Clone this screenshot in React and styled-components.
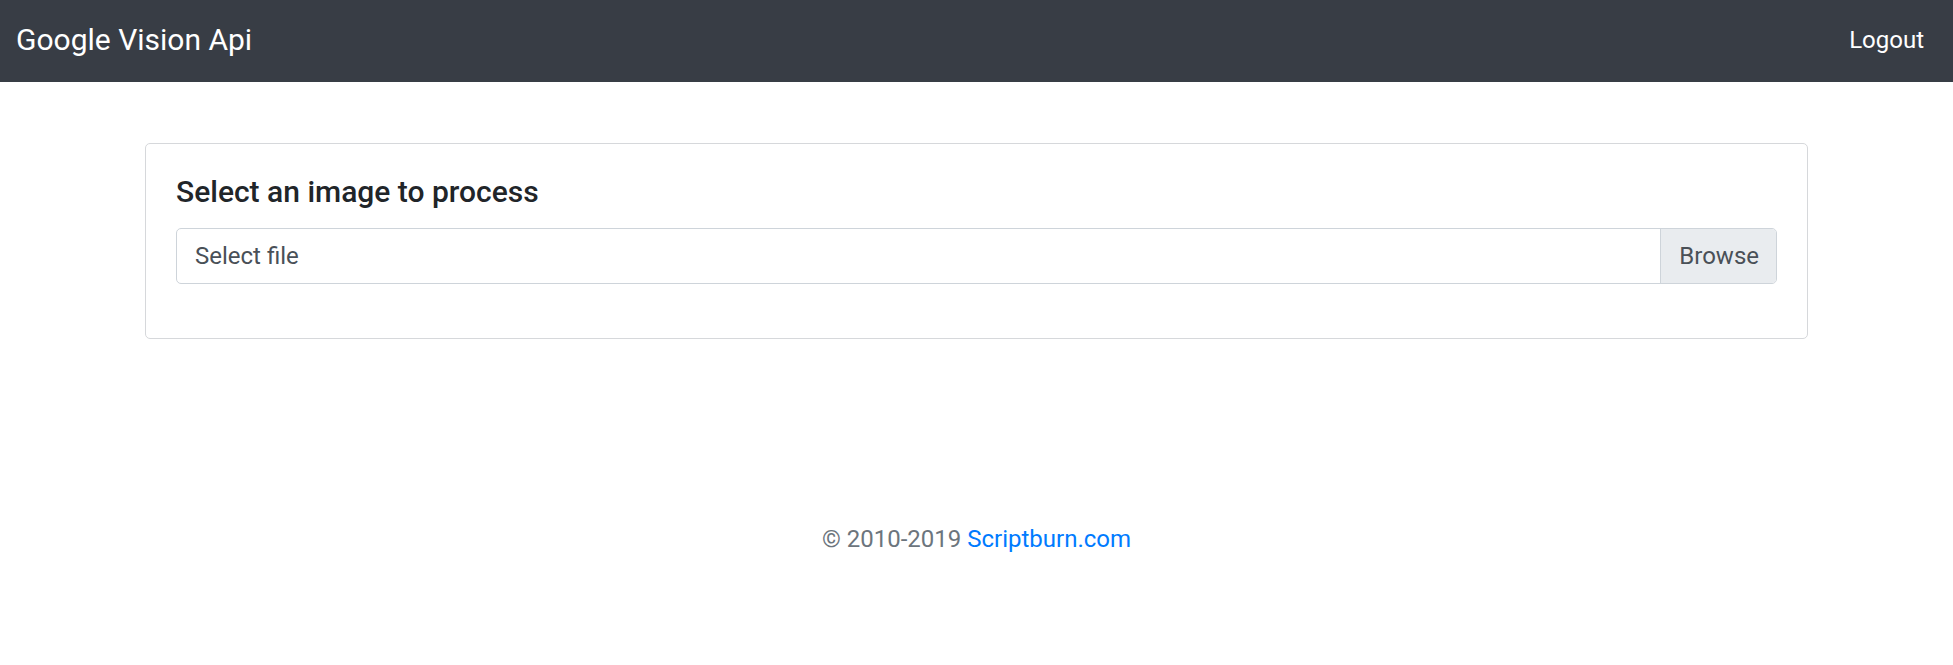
import styled, { createGlobalStyle } from 'styled-components';

const GlobalStyle = createGlobalStyle`
    body {
        margin: 0;
        font-family: Roboto, "Liberation Sans", sans-serif;
        font-size: 24px;
        line-height: 1.5;
        color: #212529;
        background: #ffffff;
    }
`;

export default function App() {
    return (
        <>
            <GlobalStyle/>
            <Navbar>
                <Brand>Google Vision Api</Brand>
                <NavLink>Logout</NavLink>
            </Navbar>
            <Card>
                <Title>Select an image to process</Title>
                <FileGroup>
                    <FileLabel>Select file</FileLabel>
                    <BrowseButton>Browse</BrowseButton>
                </FileGroup>
            </Card>
            <Footer>
                © 2010-2019 <a href="#">Scriptburn.com</a>
            </Footer>
        </>
    )
}

// styled components
const Navbar = styled.nav`
    display: flex;
    align-items: center;
    justify-content: space-between;
    box-sizing: border-box;
    height: 82px;
    padding: 0 29px 3px 16px;
    background-color: #383d45;
`;

const Brand = styled.div`
    font-size: 30px;
    color: #ffffff;
`;

const NavLink = styled.div`
    font-size: 24px;
    color: #ffffff;
`;

const Card = styled.div`
    box-sizing: border-box;
    margin: 61px 145px 0 145px;
    padding: 30px 30px 24px 30px;
    border: 1px solid #d6d8db;
    border-radius: 5px;
    height: 196px;
`;

const Title = styled.h5`
    margin: 0 0 18px 0;
    font-size: 30px;
    font-weight: 500;
    line-height: 1.2;
    color: #212529;
`;

const FileGroup = styled.div`
    display: flex;
    height: 56px;
    box-sizing: border-box;
    border: 1px solid #ced4da;
    border-radius: 5px;
    overflow: hidden;
`;

const FileLabel = styled.div`
    flex: 1;
    display: flex;
    align-items: center;
    padding-left: 18px;
    color: #495057;
    font-size: 24px;
`;

const BrowseButton = styled.div`
    display: flex;
    align-items: center;
    padding: 0 17px 0 18px;
    border-left: 1px solid #ced4da;
    background-color: #e9ecef;
    color: #495057;
    font-size: 24px;
`;

const Footer = styled.footer`
    margin-top: 182px;
    text-align: center;
    font-size: 24px;
    color: #6c757d;
    a{
        color: #007bff;
        text-decoration: none;
    }
`;
